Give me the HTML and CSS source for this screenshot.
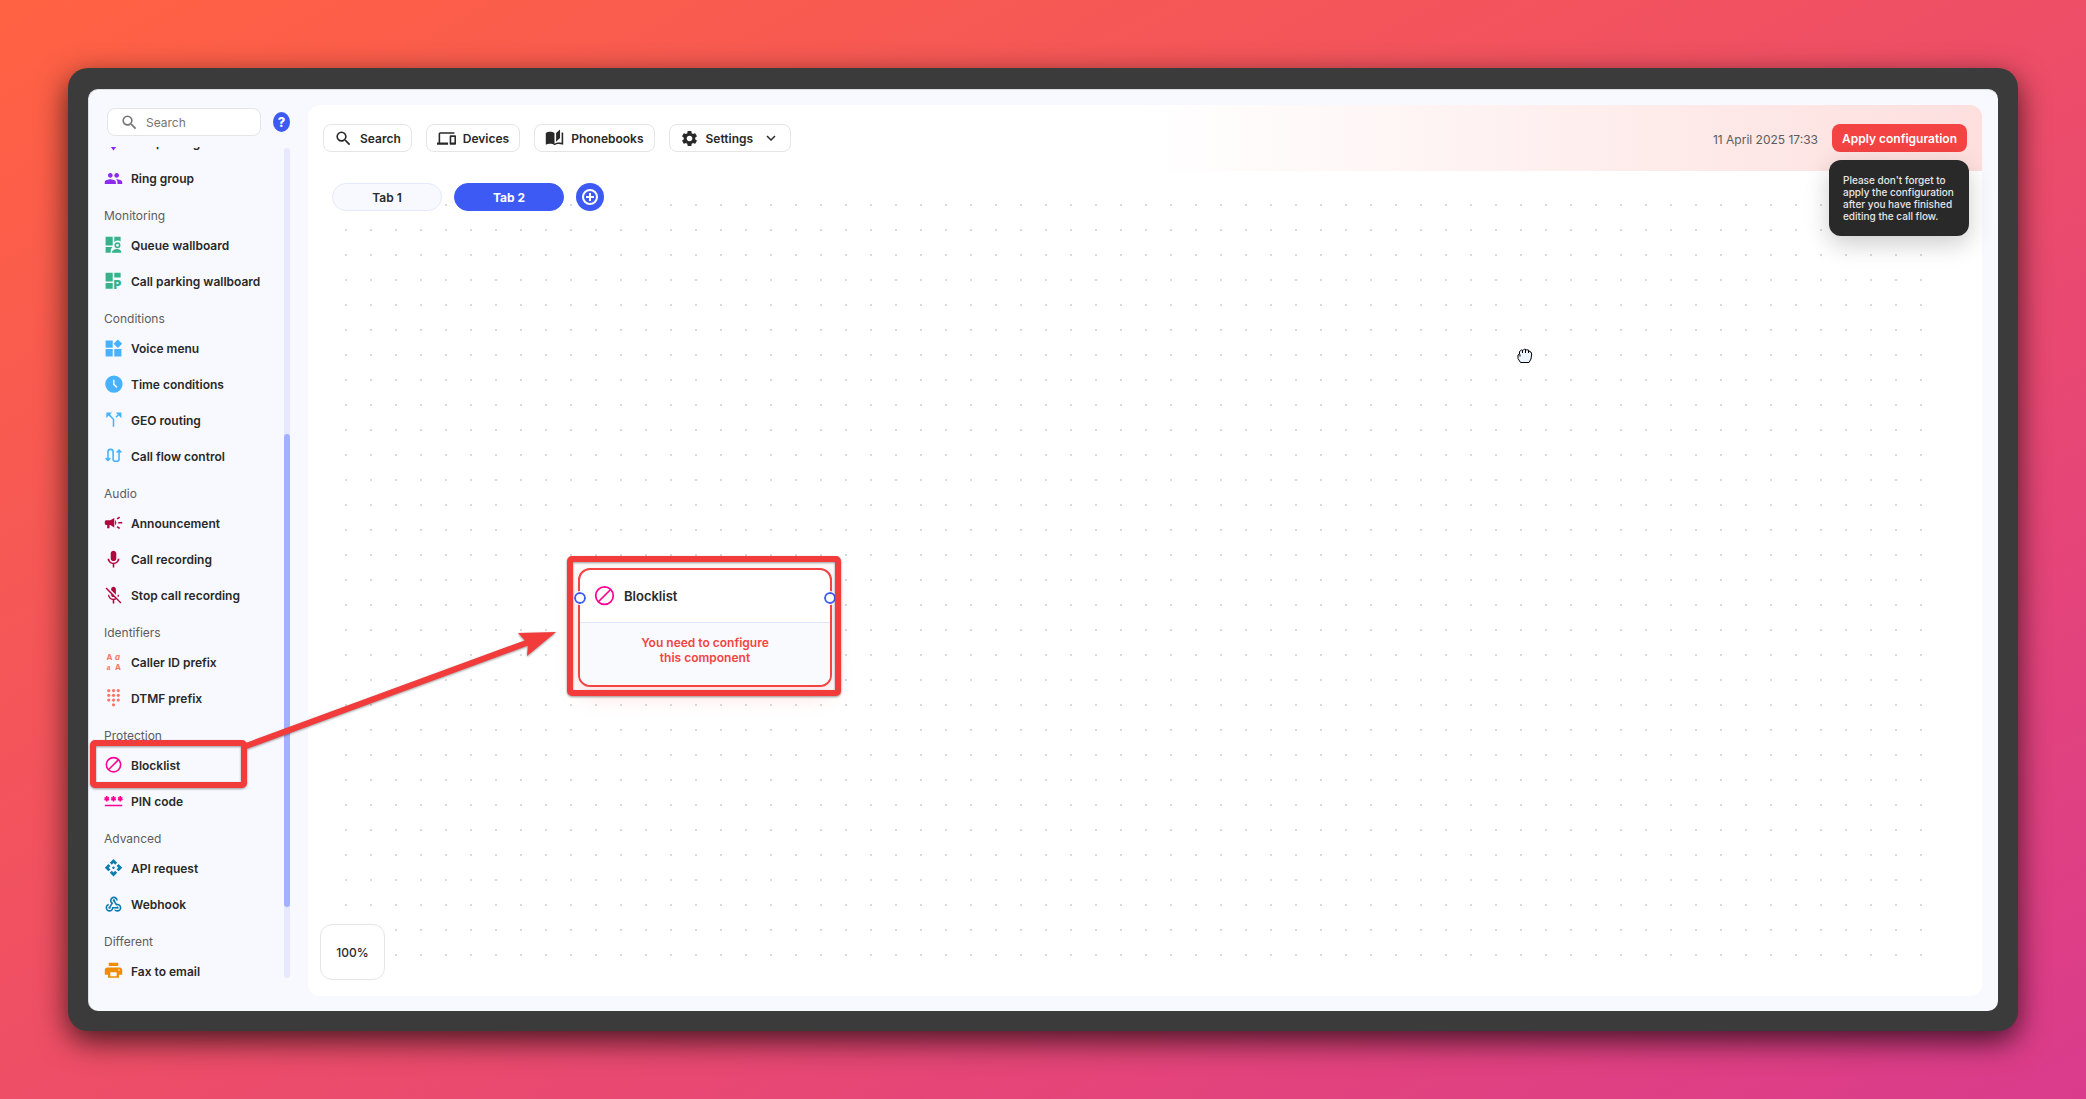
FILE: index.html
```html
<!DOCTYPE html>
<html lang="en">
<head>
    <meta charset="UTF-8">
    <meta name="viewport" content="width=device-width, initial-scale=1.0">
    <title>Call flow</title>
    <link rel="stylesheet" href="styles.css">
</head>
<body>
    <div class="device">
        <div class="screen">
            <aside class="sidebar">
                <div class="sidebar-top">
                    <div class="search-box">
                        <svg class="icon" viewBox="0 0 24 24" aria-hidden="true"><path d="M15.5 14h-.79l-.28-.27A6.471 6.471 0 0 0 16 9.5 6.5 6.5 0 1 0 9.5 16c1.61 0 3.09-.59 4.23-1.57l.27.28v.79l5 4.99L20.49 19l-4.99-5zm-6 0C7.01 14 5 11.99 5 9.5S7.01 5 9.5 5 14 7.01 14 9.5 11.99 14 9.5 14z"/></svg>
                        <input type="text" id="component-search" placeholder="Search" aria-label="Search components">
                    </div>
                    <button class="help" type="button" aria-label="Help">?</button>
                </div>
                <div class="sidebar-body">
                    <nav class="components">
                        <div class="components-list">
                            <button class="component violet" type="button">
                                <svg class="icon" viewBox="0 0 24 24" aria-hidden="true"><path d="M12 2C8.1 2 5 5.1 5 9c0 5.200 7 13 7 13s7-7.800 7-13c0-3.900-3.100-7-7-7z"/></svg>
                                Call parking
                            </button>
                            <button class="component violet" type="button">
                                <svg class="icon" viewBox="0 0 24 24" aria-hidden="true"><path d="M16 11c1.66 0 2.99-1.34 2.99-3S17.66 5 16 5c-1.66 0-3 1.34-3 3s1.34 3 3 3zm-8 0c1.66 0 2.99-1.34 2.99-3S9.66 5 8 5C6.34 5 5 6.34 5 8s1.34 3 3 3zm0 2c-2.33 0-7 1.17-7 3.5V19h14v-2.5c0-2.33-4.67-3.5-7-3.5zm8 0c-.29 0-.62.02-.97.05 1.16.84 1.97 1.97 1.97 3.45V19h6v-2.5c0-2.33-4.67-3.5-7-3.5z"/></svg>
                                Ring group
                            </button>

                            <h3 class="section">Monitoring</h3>
                            <button class="component green" type="button">
                                <svg class="icon" viewBox="0 0 24 24" aria-hidden="true"><path d="M2 1h9v11H2zM13 1h8v6a5.500 5.500 0 0 0-8 1zM2 14h8.500l-2 3v4H2z"/><path fill-rule="evenodd" d="M17 8a3.800 3.800 0 1 1 0 7.600A3.800 3.800 0 0 1 17 8zm0 2a1.800 1.800 0 1 0 0 3.600 1.800 1.800 0 0 0 0-3.600z"/><path d="M10 21c0-3 3.500-4.500 6.500-4.500S22 18 22 21z"/></svg>
                                Queue wallboard
                            </button>
                            <button class="component green" type="button">
                                <svg class="icon" viewBox="0 0 24 24" aria-hidden="true"><path d="M2 1h9v11H2zM13 1h8v6h-8zM2 14h9v7H2z"/><text x="12" y="21" class="parking-letter">P</text></svg>
                                Call parking wallboard
                            </button>

                            <h3 class="section">Conditions</h3>
                            <button class="component sky" type="button">
                                <svg class="icon" viewBox="0 0 24 24" aria-hidden="true"><path d="M13 12.500h9V22h-9zM2 12.500h9V22H2zM2 2h9v9H2zM17.500.500 12 6l5.500 5.500L23 6z"/></svg>
                                Voice menu
                            </button>
                            <button class="component sky" type="button">
                                <svg class="icon" viewBox="0 0 24 24" aria-hidden="true"><path fill-rule="evenodd" d="M12.500.500a11 11 0 1 0 0 22 11 11 0 0 0 0-22zM11.500 6h1.800v5.500l3.700 3.700-1.300 1.200-4.200-4.200z"/></svg>
                                Time conditions
                            </button>
                            <button class="component sky" type="button">
                                <svg class="icon" viewBox="0 0 24 24" aria-hidden="true"><path d="M15 2l2.300 2.300-2.900 2.900 1.400 1.400 2.900-2.900L22 9V2zM10 2H3v7l2.800-3.300 5.200 5V20h2v-9.700L7.700 4.300z"/></svg>
                                GEO routing
                            </button>
                            <button class="component sky" type="button">
                                <svg class="icon line" viewBox="0 0 24 24" aria-hidden="true"><path d="M2 14 5 17 8 14M5 17V6a3 3 0 0 1 3-3h.500a3 3 0 0 1 3 3v9a3 3 0 0 0 3 3h1.500a3 3 0 0 0 3-3V4M16 7 19 4l3 3"/></svg>
                                Call flow control
                            </button>

                            <h3 class="section">Audio</h3>
                            <button class="component crimson" type="button">
                                <svg class="icon" viewBox="0 0 24 24" aria-hidden="true"><path d="M18 10v2h5v-2h-5zm-2 6.610c.96.71 2.210 1.650 3.200 2.390.4-.53.8-1.070 1.200-1.600-.99-.74-2.240-1.680-3.200-2.400-.4.54-.8 1.080-1.200 1.610zM20.400 4.600c-.4-.53-.8-1.070-1.200-1.600-.99.74-2.240 1.680-3.200 2.400.4.53.8 1.070 1.200 1.600.96-.72 2.210-1.650 3.200-2.400zM3 8c-1.100 0-2 .9-2 2v2c0 1.100.9 2 2 2h1v4h3v-4h1l5 3V5L8 8H3zm12.500 3c0-1.330-.58-2.530-1.500-3.350v6.690c.92-.81 1.500-2.010 1.500-3.340z"/></svg>
                                Announcement
                            </button>
                            <button class="component crimson" type="button">
                                <svg class="icon" viewBox="0 0 24 24" aria-hidden="true"><path d="M12 14c1.660 0 3.500-1.340 3.500-3V4c0-1.660-1.840-3-3.500-3S8.500 2.340 8.500 4v7c0 1.660 1.840 3 3.500 3zm5.300-3c0 3-2.540 5.100-5.300 5.100S6.700 14 6.700 11H4.500c0 3.410 3.220 6.230 6.500 6.720V22h2v-4.280c3.280-.48 6.500-3.300 6.500-6.720z"/></svg>
                                Call recording
                            </button>
                            <button class="component crimson" type="button">
                                <svg class="icon" viewBox="0 0 24 24" aria-hidden="true"><path d="M19 11h-1.700c0 .74-.16 1.430-.43 2.050l1.230 1.230c.56-.98.9-2.090.9-3.280zm-4.020.17c0-.06.02-.11.02-.17V4c0-1.660-1.340-3-3-3S9 2.340 9 4v1.180l5.980 5.990zM3.270 2 2 3.270l7.010 7.010V11c0 1.660 1.330 3 2.990 3 .22 0 .44-.03.65-.08l1.660 1.660c-.71.33-1.500.52-2.310.52-2.760 0-5.300-2.100-5.300-5.100H5c0 3.410 2.720 6.230 6 6.720V22h2v-4.280c.91-.13 1.770-.45 2.540-.9L20.730 22 22 20.730z"/></svg>
                                Stop call recording
                            </button>

                            <h3 class="section">Identifiers</h3>
                            <button class="component coral" type="button">
                                <svg class="icon" viewBox="0 0 24 24" aria-hidden="true"><text x="3" y="9" class="letter">A</text><text x="14" y="9" class="letter italic">a</text><text x="3" y="22" class="letter serif">a</text><text x="14" y="22" class="letter">A</text></svg>
                                Caller ID prefix
                            </button>
                            <button class="component coral" type="button">
                                <svg class="icon" viewBox="0 0 24 24" aria-hidden="true"><circle cx="6" cy="2" r="2"/><circle cx="12" cy="2" r="2"/><circle cx="18" cy="2" r="2"/><circle cx="6" cy="8" r="2"/><circle cx="12" cy="8" r="2"/><circle cx="18" cy="8" r="2"/><circle cx="6" cy="14" r="2"/><circle cx="12" cy="14" r="2"/><circle cx="18" cy="14" r="2"/><circle cx="12" cy="20" r="2"/></svg>
                                DTMF prefix
                            </button>

                            <h3 class="section">Protection</h3>
                            <button class="component pink" type="button">
                                <svg class="icon line" viewBox="0 0 24 24" aria-hidden="true"><circle cx="12" cy="11" r="9"/><path d="M5.600 17.400 18.400 4.600"/></svg>
                                Blocklist
                            </button>
                            <button class="component pink" type="button">
                                <svg class="icon" viewBox="0 0 24 24" aria-hidden="true"><path d="M1 16h22v2H1zM2.500 5h2v1.800l1.300-.7 1 1.700-1.300.8 1.300.7-1 1.700-1.300-.7V12h-2v-1.700l-1.300.7-1-1.700 1.300-.7-1.300-.8 1-1.700 1.300.7zM11 5h2v1.800l1.300-.7 1 1.700-1.300.8 1.300.7-1 1.700-1.300-.7V12h-2v-1.700l-1.300.7-1-1.700 1.300-.7-1.300-.8 1-1.700 1.300.7zM19.500 5h2v1.800l1.300-.7 1 1.700-1.300.8 1.300.7-1 1.700-1.300-.7V12h-2v-1.700l-1.300.7-1-1.700 1.300-.7-1.300-.8 1-1.700 1.300.7z"/></svg>
                                PIN code
                            </button>

                            <h3 class="section">Advanced</h3>
                            <button class="component teal" type="button">
                                <svg class="icon" viewBox="0 0 24 24" aria-hidden="true"><path d="M14 11l-2 2-2-2 2-2 2 2zm-2-6 2.120 2.120 2.500-2.500L12 0 7.380 4.620l2.500 2.500L12 5zm-6 6 2.120-2.120-2.500-2.500L1 11l4.620 4.620 2.500-2.500L6 11zm12 0-2.120 2.120 2.500 2.500L23 11l-4.620-4.620-2.500 2.500L18 11zm-6 6-2.120-2.120-2.500 2.500L12 22l4.620-4.620-2.500-2.500L12 17z"/></svg>
                                API request
                            </button>
                            <button class="component teal" type="button">
                                <svg class="icon" viewBox="0 0 24 24" aria-hidden="true"><path d="M10 15h5.88c.27-.31.67-.5 1.12-.5.83 0 1.5.67 1.5 1.5s-.67 1.5-1.5 1.5c-.44 0-.84-.19-1.12-.5H11.9c-.46 2.28-2.48 4-4.9 4-2.76 0-5-2.24-5-5 0-2.42 1.72-4.44 4-4.9v2.07C4.84 13.58 4 14.7 4 16c0 1.65 1.35 3 3 3s3-1.35 3-3v-1zm2.500-11c1.650 0 3 1.350 3 3h2c0-2.760-2.240-5-5-5s-5 2.240-5 5c0 1.430.6 2.710 1.550 3.620l-2.350 3.900c-.68.14-1.200.75-1.200 1.480 0 .83.67 1.500 1.500 1.500s1.500-.67 1.500-1.500c0-.16-.02-.31-.07-.45l3.380-5.630C10.490 9.610 9.500 8.420 9.500 7c0-1.650 1.350-3 3-3zm4.500 9c-.64 0-1.230.2-1.720.54l-3.050-5.070C11.530 8.350 11 7.740 11 7c0-.83.67-1.500 1.500-1.500S14 6.170 14 7c0 .15-.02.29-.06.43l2.190 3.650c.28-.05.57-.08.87-.08 2.760 0 5 2.240 5 5s-2.240 5-5 5c-1.850 0-3.470-1.010-4.330-2.500h2.670c.48.32 1.050.5 1.660.5 1.650 0 3-1.350 3-3s-1.350-3-3-3z"/></svg>
                                Webhook
                            </button>

                            <h3 class="section">Different</h3>
                            <button class="component orange" type="button">
                                <svg class="icon" viewBox="0 0 24 24" aria-hidden="true"><path d="M20 7H4c-1.660 0-3 1.340-3 3v6h4v4h14v-4h4v-6c0-1.660-1.340-3-3-3zm-4 11H8v-5h8v5zm3-7c-.55 0-1-.45-1-1s.45-1 1-1 1 .45 1 1-.45 1-1 1zm-1-10H6v4h12V1z"/></svg>
                                Fax to email
                            </button>
                        </div>
                    </nav>
                    <div class="scroll-track"><div class="scroll-thumb"></div></div>
                </div>
            </aside>

            <main class="panel">
                <header class="toolbar">
                    <button class="tool" type="button">
                        <svg class="icon" viewBox="0 0 24 24" aria-hidden="true"><path d="M15.5 14h-.79l-.28-.27A6.471 6.471 0 0 0 16 9.5 6.5 6.5 0 1 0 9.5 16c1.61 0 3.09-.59 4.23-1.57l.27.28v.79l5 4.99L20.49 19l-4.99-5zm-6 0C7.01 14 5 11.99 5 9.5S7.01 5 9.5 5 14 7.01 14 9.5 11.99 14 9.5 14z"/></svg>
                        Search
                    </button>
                    <button class="tool" type="button">
                        <svg class="icon" viewBox="0 0 24 24" aria-hidden="true"><path d="M4 6h18V4H4c-1.100 0-2 .9-2 2v11H0v3h14v-3H4V6zm19 2h-6c-.55 0-1 .45-1 1v10c0 .55.45 1 1 1h6c.55 0 1-.45 1-1V9c0-.55-.45-1-1-1zm-1 9h-4v-7h4v7z"/></svg>
                        Devices
                    </button>
                    <button class="tool" type="button">
                        <svg class="icon" viewBox="0 0 24 24" aria-hidden="true"><path d="M19 .5l-5 4.500v11l5-4.500V.5zM1 5v15c2-1 4-1.300 5.500-1.300 1.950 0 4.050.4 5.500 1.500V5c-1.450-1.100-3.550-1.500-5.500-1.500S2.450 3.900 1 5zm22 13.500V5c-.6-.45-1.250-.75-2-1v13.500c-1.100-.35-2.300-.5-3.500-.5-1.700 0-4.150.65-5.500 1.500v2c1.350-.85 3.800-1.500 5.500-1.500 1.650 0 3.350.3 5.500 1z"/></svg>
                        Phonebooks
                    </button>
                    <button class="tool tool-menu" type="button" aria-haspopup="menu">
                        <svg class="icon" viewBox="0 0 24 24" aria-hidden="true"><path d="M19.140 12.940c.04-.3.06-.61.06-.94 0-.32-.02-.64-.07-.94l2.030-1.580c.18-.14.23-.41.12-.61l-1.920-3.320c-.12-.22-.37-.29-.59-.22l-2.390.96c-.5-.38-1.030-.7-1.620-.94l-.36-2.540c-.04-.24-.24-.41-.48-.41h-3.840c-.24 0-.43.17-.47.41l-.36 2.540c-.59.24-1.130.57-1.620.94l-2.390-.96c-.22-.08-.47 0-.59.22L2.740 8.870c-.12.21-.08.47.12.61l2.030 1.580c-.05.3-.09.63-.09.94s.02.64.07.94l-2.030 1.580c-.18.14-.23.41-.12.61l1.920 3.320c.12.22.37.29.59.22l2.390-.96c.5.38 1.030.7 1.620.94l.36 2.540c.05.24.24.41.48.41h3.840c.24 0 .44-.17.47-.41l.36-2.540c.59-.24 1.130-.56 1.620-.94l2.390.96c.22.08.47 0 .59-.22l1.920-3.320c.12-.22.07-.47-.12-.61l-2.010-1.580zM12 15.600c-1.980 0-3.600-1.620-3.600-3.600s1.620-3.600 3.600-3.600 3.600 1.620 3.600 3.600-1.620 3.600-3.600 3.600z"/></svg>
                        Settings
                        <svg class="icon chevron" viewBox="0 0 24 24" aria-hidden="true"><path d="M16.590 8.590 12 13.170 7.410 8.590 6 10l6 6 6-6z"/></svg>
                    </button>
                    <time class="clock" datetime="2025-04-11T17:33">11 April 2025 17:33</time>
                    <div class="apply-wrap">
                        <button class="apply" type="button" aria-describedby="apply-hint">Apply configuration</button>
                        <div class="hint" id="apply-hint" role="tooltip">Please don't forget to apply the configuration after you have finished editing the call flow.</div>
                    </div>
                </header>

                <section class="board">
                    <div class="tabs">
                        <button class="tab" type="button">Tab 1</button>
                        <button class="tab active" type="button">Tab 2</button>
                        <button class="tab-add" type="button" aria-label="Add tab">
                            <svg viewBox="0 0 18 18" aria-hidden="true"><circle cx="9" cy="9" r="7"/><path d="M9 5v8M5 9h8"/></svg>
                        </button>
                    </div>

                    <div class="node">
                        <div class="node-head">
                            <svg class="node-icon" viewBox="0 0 24 24" aria-hidden="true"><circle cx="12" cy="11" r="10"/><path d="M5 18 19 4"/></svg>
                            <span>Blocklist</span>
                        </div>
                        <p class="node-body">You need to configure<br>this component</p>
                        <span class="port port-in"></span>
                        <span class="port port-out"></span>
                    </div>

                    <svg class="grab" viewBox="0 0 16 16" aria-hidden="true"><path d="M3.500 14.500 1 10.500V7l1.500-.8V3.500L4.500 2l1.500.500L7.500 1l2 .800 2 .200 1 1.500 1.500.500.700 2-.700 5-2 3.500z"/><path d="M5.500 2.500V5M8.500 2v3M11.500 2.500V5M3 6.500v2"/></svg>

                    <div class="zoom">100%</div>
                </section>
            </main>

            <svg class="marks" viewBox="0 0 780 720" aria-hidden="true">
                <rect x="4" y="653" width="151" height="42" rx="2"/>
                <rect x="481" y="469" width="268" height="134" rx="2"/>
                <path d="M157 656 440 552"/>
                <path class="marks-head" d="M429 543 467 542 438 566 439 554z"/>
            </svg>
        </div>
    </div>
</body>
</html>
```
FILE: styles.css
```css
* {
    box-sizing: border-box;
}
body {
    margin: 0;
    min-height: 100vh;
    padding: 68px;
    display: flex;
    font-family: Inter, "Liberation Sans", sans-serif;
    font-size: 12px;
    color: #292929;
    background: linear-gradient(to bottom right, #ff6242, #ee4e66 50%, #da3b8c);
}
button, input {
    font: inherit;
    color: inherit;
}
button {
    margin: 0;
    padding: 0;
    border: none;
    background: none;
    cursor: pointer;
}
.icon {
    width: 19px;
    height: 19px;
    flex: none;
    fill: currentColor;
}
.line {
    fill: none;
    stroke: currentColor;
    stroke-width: 2;
}

/* device frame */
.device {
    flex: 1;
    display: flex;
    padding: 21px 20px 20px;
    border-radius: 20px;
    background: #3b3b3b;
    box-shadow: 0 10px 30px rgba(0, 0, 0, 0.7);
}
.screen {
    position: relative;
    flex: 1;
    display: flex;
    border-top: 1px solid #dcdce4;
    border-left: 1px solid #dcdce4;
    border-radius: 10px;
    background: #f8f9ff;
}

/* sidebar */
.sidebar {
    width: 219px;
    display: flex;
    flex-direction: column;
    padding: 18px 18px 33px 15px;
}
.sidebar-top {
    display: flex;
    align-items: center;
    gap: 12px;
    padding-left: 3px;
}
.search-box {
    width: 154px;
    height: 28px;
    display: flex;
    align-items: center;
    gap: 7px;
    padding: 0 12px;
    border: 1px solid #e5e5e5;
    border-radius: 8px;
    background: #fff;
    color: #757575;
}
.search-box input {
    flex: 1;
    min-width: 0;
    padding: 0;
    border: none;
    outline: none;
    background: none;
}
.search-box input::placeholder {
    color: #757575;
}
.help {
    width: 20px;
    height: 20px;
    border-radius: 50%;
    background: #3d5af5;
    color: #fff;
    font-size: 13px;
    font-weight: 800;
}
.sidebar-body {
    flex: 1 1 0;
    min-height: 0;
    display: flex;
    margin-top: 11px;
}
.components {
    flex: 1;
    overflow: hidden;
}
/* the list is scrolled down to its last group */
.components-list {
    display: flex;
    flex-direction: column;
    margin-top: -23px;
}
.component {
    height: 36px;
    flex: none;
    display: flex;
    align-items: center;
    gap: 8px;
    font-weight: 600;
    color: #292929;
    white-space: nowrap;
}
.section {
    flex: none;
    margin: 0;
    padding: 11px 0 3px;
    font-size: 12px;
    line-height: 17px;
    font-weight: 400;
    color: #5c5c5c;
}
.violet .icon { color: #8b2cf5; }
.green .icon { color: #36b38a; }
.sky .icon { color: #47b2ff; }
.crimson .icon { color: #b3063d; }
.coral .icon { color: #ff7366; }
.pink .icon { color: #ff0095; }
.teal .icon { color: #0a7cae; }
.orange .icon { color: #f08c00; }
.parking-letter {
    font-size: 15px;
    font-weight: 900;
}
.letter {
    font-size: 10px;
    font-weight: 700;
}
.italic {
    font-style: italic;
}
.serif {
    font-family: "Liberation Serif", serif;
}
.scroll-track {
    width: 6px;
    margin-top: 1px;
    border-radius: 3px;
    background: #e6e9fd;
    padding-top: 286px;
}
.scroll-thumb {
    height: 473px;
    border-radius: 3px;
    background: #a3b0ff;
}

/* main panel */
.panel {
    flex: 1;
    display: flex;
    flex-direction: column;
    margin: 15px 16px 15px 0;
    border-radius: 12px;
    background: #fff;
}
.toolbar {
    position: relative;
    z-index: 1;
    height: 66px;
    display: flex;
    align-items: center;
    gap: 14px;
    padding: 0 15px;
    border-radius: 12px 12px 0 0;
    background: linear-gradient(90deg, #fff 50%, #fddfde);
}
.tool {
    height: 28px;
    display: flex;
    align-items: center;
    gap: 7px;
    padding: 0 10px;
    border: 1px solid #e5e5e5;
    border-radius: 8px;
    background: #fff;
    font-weight: 600;
}
.chevron {
    width: 18px;
    height: 18px;
    margin-left: 2px;
}
.clock {
    margin-left: auto;
    padding-top: 2px;
    color: #5c5c5c;
}
.apply-wrap {
    position: relative;
}
.apply {
    height: 28px;
    padding: 0 10px;
    border-radius: 8px;
    background: #f34343;
    color: #fff;
    font-weight: 600;
}
.hint {
    position: absolute;
    top: 36px;
    right: -2px;
    width: 140px;
    padding: 14px;
    border-radius: 12px;
    background: #292929;
    color: #e6e6e6;
    font-size: 10px;
    line-height: 12px;
    font-weight: 500;
    box-shadow: 0 8px 24px rgba(0, 0, 0, 0.2);
}

/* flow canvas */
.board {
    position: relative;
    flex: 1;
    display: flex;
    flex-direction: column;
    padding: 12px 12px 16px;
}
.board::before {
    content: "";
    position: absolute;
    inset: 22px 48px 28px 26px;
    background: radial-gradient(circle at 12px 12px, #d9d9d9 1px, transparent 1px) 0 0 / 25px 25px;
}
.tabs {
    position: relative;
    display: flex;
    gap: 12px;
    padding-left: 12px;
}
.tab {
    width: 110px;
    height: 28px;
    border: 1px solid #e6e9fd;
    border-radius: 14px;
    background: #f8f9ff;
    font-weight: 600;
}
.tab.active {
    border-color: #3d5af5;
    background: #3d5af5;
    color: #fff;
    font-weight: 700;
}
.tab-add {
    width: 28px;
    height: 28px;
    display: flex;
    align-items: center;
    justify-content: center;
    border-radius: 50%;
    background: #3d5af5;
}
.tab-add svg {
    width: 18px;
    height: 18px;
    fill: none;
    stroke: #fff;
    stroke-width: 2;
}
.node {
    position: absolute;
    left: 270px;
    top: 397px;
    width: 254px;
    border: 2px solid #f34343;
    border-radius: 12px;
    background: #fff;
    box-shadow: 0 6px 24px rgba(243, 67, 67, 0.2);
}
.node-head {
    height: 53px;
    display: flex;
    align-items: center;
    gap: 9px;
    padding: 0 14px;
    border-bottom: 1px solid #e0e5fb;
    font-size: 13px;
    font-weight: 600;
}
.node-icon {
    width: 21px;
    height: 21px;
    fill: none;
    stroke: #ff0095;
    stroke-width: 2;
}
.node-body {
    margin: 0;
    height: 62px;
    padding-top: 12px;
    border-radius: 0 0 10px 10px;
    background: #f9fafd;
    color: #f34343;
    line-height: 15px;
    font-weight: 600;
    text-align: center;
}
.port {
    position: absolute;
    top: 22px;
    width: 12px;
    height: 12px;
    border: 2px solid #3d5af5;
    border-radius: 50%;
    background: #fff;
    outline: 1px solid #fff;
}
.port-in {
    left: -6px;
}
.port-out {
    right: -6px;
}
.grab {
    position: absolute;
    left: 1209px;
    top: 177px;
    width: 16px;
    height: 16px;
    fill: #edf5ff;
    stroke: #000;
    stroke-width: 1;
}
.zoom {
    position: relative;
    width: 65px;
    height: 56px;
    display: flex;
    align-items: center;
    justify-content: center;
    margin-top: auto;
    border: 1px solid #e5e5e5;
    border-radius: 12px;
    background: #fff;
    font-weight: 500;
}

/* highlight boxes and the arrow between them */
.marks {
    position: absolute;
    left: 0;
    top: 0;
    z-index: 2;
    width: 780px;
    height: 720px;
    fill: none;
    stroke: #f23b3b;
    stroke-width: 6;
    pointer-events: none;
    filter: drop-shadow(0 1px 1px rgba(0, 0, 0, 0.4));
}
.marks-head {
    fill: #f23b3b;
    stroke: none;
}
```
